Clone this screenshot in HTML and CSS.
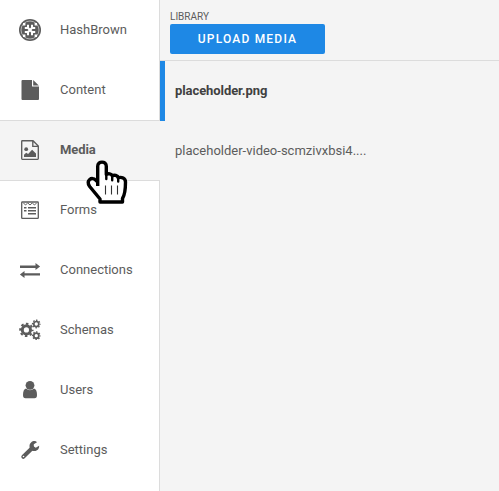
FILE: index.html
```html
<!DOCTYPE html>
<html lang="en">
<head>
<meta charset="utf-8">
<title>HashBrown</title>
<link rel="stylesheet" href="styles.css">
</head>
<body>
<div class="app">
  <nav class="nav">
    <a class="nav-item">
      <svg class="icon" viewBox="0 0 30 30"><circle cx="15" cy="15" r="11" fill="#5c5c5c"/><circle cx="15" cy="15" r="9" fill="none" stroke="#ccc" stroke-width=".8"/><path d="M8 8h2.400v2.400H8zM19.600 8H22v2.400h-2.400zM8 19.600h2.400V22H8zM19.600 19.600H22V22h-2.400z" fill="#fff"/><path d="M11.800 11.800l6.400 6.400M18.200 11.800l-6.400 6.400" stroke="#fff" stroke-width="2.200"/><path d="M12 9.800h2v3h-2zM16 9.800h2v3h-2zM12 17.200h2v3h-2zM16 17.200h2v3h-2zM9.800 12h3v2h-3zM9.800 16h3v2h-3zM17.200 12h3v2h-3zM17.200 16h3v2h-3z" fill="#fff"/></svg>
      <span>HashBrown</span>
    </a>
    <a class="nav-item">
      <svg class="icon" viewBox="0 0 30 30" fill="currentColor"><path d="M7.500 5H17v6.500h7V24q0 1-1 1H7.500q-1 0-1-1V6q0-1 1-1z"/><path d="M18.200 5l5.600 5.400h-5.600z"/></svg>
      <span>Content</span>
    </a>
    <a class="nav-item active">
      <svg class="icon" viewBox="0 0 30 30"><path d="M7.300 5.700H18l5.300 5.400v12.500q0 .7-.7.700H7.300q-.6 0-.6-.7V6.400q0-.7.600-.7zM17.800 5.700v5.600h5.500" fill="none" stroke="currentColor" stroke-width="1.350"/><circle cx="11.200" cy="14.200" r="1.900" fill="currentColor"/><path d="M9 22v-2.300l2.200-2 1.900 1.200 4-4.200L21 18.500V22z" fill="currentColor"/></svg>
      <span>Media</span>
    </a>
    <a class="nav-item">
      <svg class="icon" viewBox="0 0 30 30" fill="none" stroke="currentColor"><rect x="6.700" y="7" width="16.600" height="16.400" rx=".7" stroke-width="1.300"/><path d="M8.500 8l2 2 2.200-2M12.800 8l2.200 2 2.200-2M17.300 8l2.200 2 2-2" stroke-width="1"/><path d="M9 12.800h2.500M13 12.800h8M9 15.800h2.500M13 15.800h8M13 18.800h8" stroke-width="1.400"/></svg>
      <span>Forms</span>
    </a>
    <a class="nav-item">
      <svg class="icon" viewBox="0 0 30 30" fill="currentColor"><path d="M5 10.500h15.500V8.100l4.600 3.500-4.600 3.500v-2.200H5zM25 18.200H9.500V15.900l-4.600 3.500 4.600 3.500v-2.300H25z"/></svg>
      <span>Connections</span>
    </a>
    <a class="nav-item">
      <svg class="icon" viewBox="0 0 30 30" fill="none" stroke="currentColor"><circle cx="11.400" cy="14.900" r="4.100" stroke-width="3"/><circle cx="11.400" cy="14.900" r="6.200" stroke-width="2" stroke-dasharray="2.500 2.370" stroke-dashoffset="1.250"/><circle cx="21.300" cy="9" r="2.500" stroke-width="1.700"/><circle cx="21.300" cy="9" r="3.700" stroke-width="1.400" stroke-dasharray="1.500 1.406" stroke-dashoffset=".75"/><circle cx="21.300" cy="20.700" r="2.500" stroke-width="1.700"/><circle cx="21.300" cy="20.700" r="3.700" stroke-width="1.400" stroke-dasharray="1.500 1.406" stroke-dashoffset=".75"/></svg>
      <span>Schemas</span>
    </a>
    <a class="nav-item">
      <svg class="icon" viewBox="0 0 30 30" fill="currentColor"><circle cx="15" cy="10.300" r="4.400"/><path d="M11 13.500q4 3.400 8 0 3 .8 3 6.500 0 3.200-2.500 3.200h-9Q8 23.200 8 20q0-5.700 3-6.500z"/></svg>
      <span>Users</span>
    </a>
    <a class="nav-item">
      <svg class="icon" viewBox="0 0 30 30"><path d="M8.300 21.800l9.200-9" stroke="currentColor" stroke-width="4" stroke-linecap="round"/><path d="M22 7.200l-3.200 2v2.300l2 1.200 3.300-1.900c.4 2.600-1.500 5.300-4.600 5.300-3 0-5-2.300-5-4.900C14.500 8 17 6 19.500 6c1 0 1.900.400 2.500 1.200z" fill="currentColor"/><circle cx="8.500" cy="21.500" r=".8" fill="#fff"/></svg>
      <span>Settings</span>
    </a>
  </nav>
  <main class="pane">
    <header class="pane-header">
      <div class="label">LIBRARY</div>
      <button class="upload">UPLOAD MEDIA</button>
    </header>
    <div class="file selected">placeholder.png</div>
    <div class="file">placeholder-video-scmzivxbsi4....</div>
  </main>
  <svg class="cursor" viewBox="80 155 55 55"><path d="M97.700 186V166.300c0-5.600 8.600-5.600 8.600 0v8.200c1.800-1.500 5.200-.8 5.900 1.300 2-1.300 5.400-.4 6 1.900 3.400-1 7.300.4 7.300 4.300 0 7.500-.5 12.500-3 16.500V202H100v-3L89.700 186.500c-4.300-6.200 2.300-10.300 6-6.400l2 2" fill="#fff" stroke="#000" stroke-width="3.400" stroke-linejoin="round"/><path d="M106.300 174v5M112.200 176v4.200M118.200 177.700v3.800" stroke="#000" stroke-width="2.400" stroke-linecap="round"/><path d="M105.500 185.500v9M111.500 185.500v9M117.500 185.500v9" stroke="#333" stroke-width="1.100"/></svg>
</div>
</body>
</html>
```

FILE: styles.css
```css
* { box-sizing: border-box; }
body {
  margin: 0;
  font-family: Roboto, "Liberation Sans", sans-serif;
  font-size: 13px;
  color: #5c5c5c;
  background: #f4f4f4;
}
.app { position: relative; display: flex; height: 491px; overflow: hidden; }
.nav { width: 160px; flex: none; background: #fff; border-right: 1px solid #dcdcdc; }
.nav-item {
  display: flex;
  align-items: center;
  height: 60px;
  padding-left: 15px;
  gap: 15px;
}
.nav-item span { padding-bottom: 2px; }
.nav-item.active {
  height: 61px;
  margin: 0 -1px -1px 0;
  padding-bottom: 1px;
  background: #f4f4f4;
  border-top: 1px solid #dcdcdc;
  border-bottom: 1px solid #dcdcdc;
  font-weight: 700;
  letter-spacing: -.08px;
}
.nav-item.active .icon { margin-top: -1px; }
.icon { width: 30px; height: 30px; flex: none; }
.pane { flex: 1; min-width: 0; }
.pane-header { height: 61px; padding: 10px 10px 0; border-bottom: 1px solid #dcdcdc; }
.label { font-size: 10px; line-height: 14px; }
.upload {
  display: block;
  width: 155px;
  height: 30px;
  padding: 0;
  border: 0;
  border-radius: 2px;
  background: #1e88e5;
  color: #fff;
  font: 500 12px/30px Roboto, sans-serif;
  letter-spacing: 1.2px;
}
.file { height: 60px; padding-left: 15px; line-height: 60px; }
.file.selected {
  padding-left: 10px;
  border-left: 5px solid #1e88e5;
  color: #404040;
  font-weight: 700;
  letter-spacing: -.08px;
}
.cursor { position: absolute; left: 80px; top: 155px; width: 55px; height: 55px; }
```
